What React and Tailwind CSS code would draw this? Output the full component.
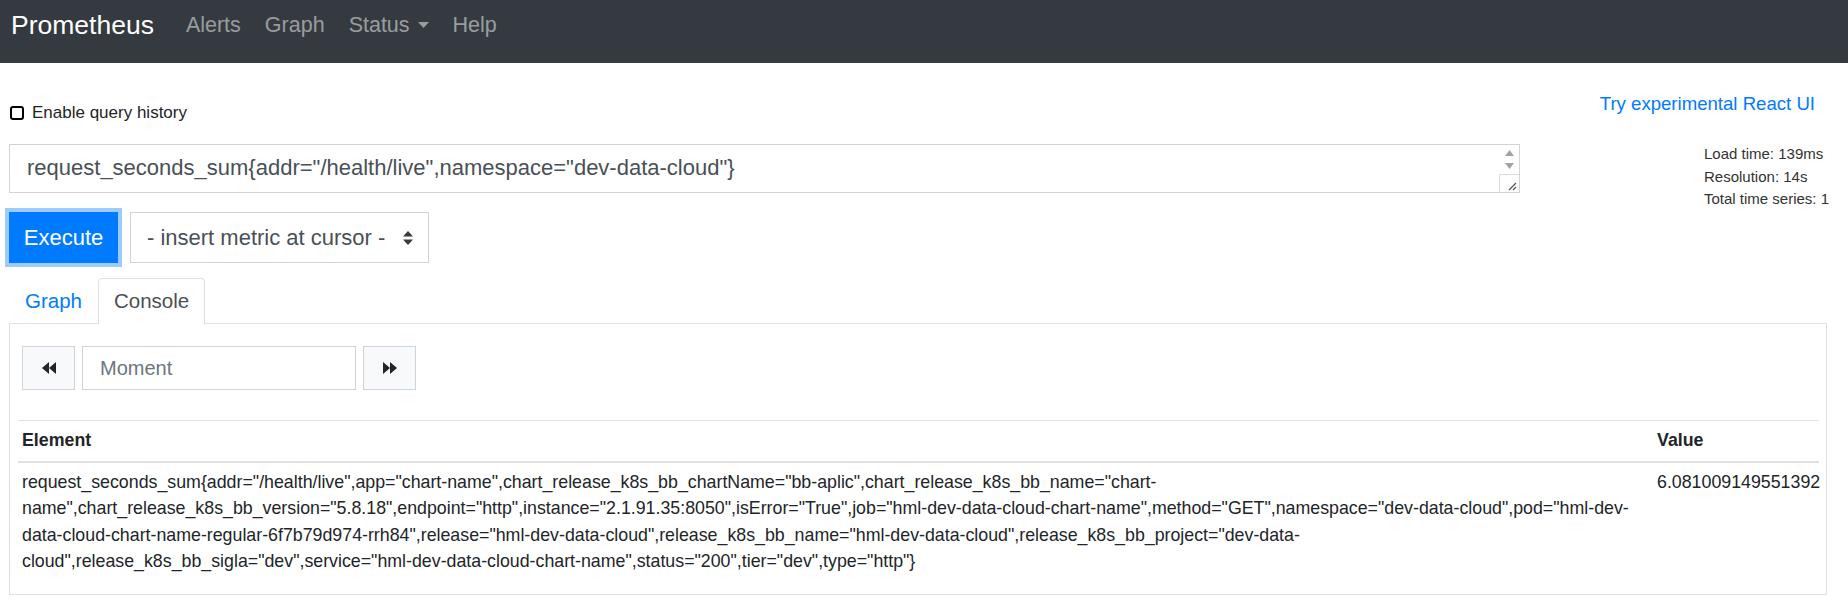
import React from 'react';

const lines = [
    'request_seconds_sum{addr="/health/live",app="chart-name",chart_release_k8s_bb_chartName="bb-aplic",chart_release_k8s_bb_name="chart-',
    'name",chart_release_k8s_bb_version="5.8.18",endpoint="http",instance="2.1.91.35:8050",isError="True",job="hml-dev-data-cloud-chart-name",method="GET",namespace="dev-data-cloud",pod="hml-dev-',
    'data-cloud-chart-name-regular-6f7b79d974-rrh84",release="hml-dev-data-cloud",release_k8s_bb_name="hml-dev-data-cloud",release_k8s_bb_project="dev-data-',
    'cloud",release_k8s_bb_sigla="dev",service="hml-dev-data-cloud-chart-name",status="200",tier="dev",type="http"}',
];

function Navbar() {
    return (
        <div className="h-[63px] bg-[#343a40] flex items-start pt-[7px] px-[11px] leading-[36px]">
            <span className="text-white text-[26.5px] mr-[20px]">Prometheus</span>
            <span className="text-white/50 text-[21.5px] px-[12px]">Alerts</span>
            <span className="text-white/50 text-[21.5px] px-[12px]">Graph</span>
            <span className="text-white/50 text-[21.5px] px-[12px] flex items-center">
                Status
                <svg width="11" height="6" viewBox="0 0 11 6" className="ml-[8px]">
                    <polygon points="0,0 11,0 5.5,6" fill="currentColor" />
                </svg>
            </span>
            <span className="text-white/50 text-[21.5px] px-[12px]">Help</span>
        </div>
    );
}

function Backward() {
    return (
        <svg width="14" height="14" viewBox="0 0 14 14">
            <polygon points="7,1 0,7 7,13" fill="#212529" />
            <polygon points="14,1 7,7 14,13" fill="#212529" />
        </svg>
    );
}

function Forward() {
    return (
        <svg width="14" height="14" viewBox="0 0 14 14">
            <polygon points="0,1 7,7 0,13" fill="#212529" />
            <polygon points="7,1 14,7 7,13" fill="#212529" />
        </svg>
    );
}

export default function App() {
    return (
        <div className="w-[1848px] min-h-[603px] bg-white text-[#212529] font-['Segoe_UI','Liberation_Sans',sans-serif]">
            <Navbar />
            <div className="pl-[9px]">
                <div className="flex justify-between h-[81px] pr-[33px]">
                    <label className="mt-[37px] h-[26px] flex items-center text-[17px]">
                        <span className="w-[14px] h-[14px] border-2 border-black rounded-[3px] ml-[1px] mr-[8px]" />
                        Enable query history
                    </label>
                    <a className="mt-[27px] h-[28px] text-[18.6px] text-[#007bff] leading-[28px]">Try experimental React UI</a>
                </div>

                <div className="flex h-[68px]">
                    <div className="relative w-[1511px] h-[49px] border border-[#ced4da] bg-white">
                        <div className="pl-[17px] pt-[7px] text-[22px] text-[#495057] leading-[32px] whitespace-nowrap">
                            request_seconds_sum{'{'}addr="/health/live",namespace="dev-data-cloud"{'}'}
                        </div>
                        <div className="absolute right-0 top-0 w-[20px] h-[48px] flex flex-col items-center">
                            <svg width="9" height="6" viewBox="0 0 9 6" className="mt-[5px]">
                                <polygon points="4.5,0 9,6 0,6" fill="#a3a3a3" />
                            </svg>
                            <svg width="9" height="6" viewBox="0 0 9 6" className="mt-[7px]">
                                <polygon points="0,0 9,0 4.5,6" fill="#a3a3a3" />
                            </svg>
                            <div className="mt-[5px] w-[20px] h-[19px] border-l border-t border-[#dcdcdc] flex items-end justify-end p-[2px]">
                                <svg width="10" height="10" viewBox="0 0 10 10">
                                    <line x1="2" y1="9" x2="9" y2="2" stroke="#555" strokeWidth="1.2" />
                                    <line x1="6" y1="9" x2="9" y2="6" stroke="#555" strokeWidth="1.2" />
                                </svg>
                            </div>
                        </div>
                    </div>
                    <div className="ml-[184px] -mt-[1px] text-[15px] leading-[22.5px] text-[#333]">
                        <div>Load time: 139ms</div>
                        <div>Resolution: 14s</div>
                        <div>Total time series: 1</div>
                    </div>
                </div>

                <div className="flex items-center gap-[12px] h-[51px]">
                    <button className="w-[109px] h-[51px] bg-[#007bff] text-white text-[22px] ring-4 ring-[#9ccbff]">
                        Execute
                    </button>
                    <div className="w-[299px] h-[51px] border border-[#ced4da] flex items-center justify-between pl-[16px] pr-[15px] text-[22px] text-[#495057]">
                        <span>- insert metric at cursor -</span>
                        <svg width="10" height="16" viewBox="0 0 10 16">
                            <polygon points="5,1 10,6.5 0,6.5" fill="#343a40" />
                            <polygon points="0,9.5 10,9.5 5,15" fill="#343a40" />
                        </svg>
                    </div>
                </div>

                <div className="mt-[15px] w-[1818px]">
                    <div className="flex h-[46px] border-b border-[#dee2e6]">
                        <div className="px-[15px] h-[46px] flex items-center text-[20.5px] text-[#007bff] border border-transparent">Graph</div>
                        <div className="px-[15px] h-[47px] flex items-center text-[20.5px] text-[#495057] bg-white border border-[#dee2e6] border-b-white rounded-t-[4px]">Console</div>
                    </div>
                    <div className="h-[271px] border-x border-b border-[#dee2e6] px-[8px] pt-[22px]">
                        <div className="flex gap-[7px] pl-[4px]">
                            <button className="w-[53px] h-[44px] bg-[#f8f9fa] border border-[#ced4da] flex items-center justify-center">
                                <Backward />
                            </button>
                            <div className="w-[274px] h-[44px] border border-[#ced4da] flex items-center pl-[17px] text-[20px] text-[#6c757d]">
                                Moment
                            </div>
                            <button className="w-[53px] h-[44px] bg-[#f8f9fa] border border-[#ced4da] flex items-center justify-center">
                                <Forward />
                            </button>
                        </div>

                        <table className="mt-[30px] w-[1801px] table-fixed text-[17.8px] border-collapse">
                            <thead>
                                <tr className="border-t border-[#dee2e6] border-b-2">
                                    <th className="text-left font-bold px-[4px] h-[41px] align-middle">Element</th>
                                    <th className="text-left font-bold px-[5px] h-[41px] align-middle w-[167px]">Value</th>
                                </tr>
                            </thead>
                            <tbody>
                                <tr className="border-t-2 border-[#dee2e6]">
                                    <td className="px-[4px] pt-[6px] align-top leading-[26.5px] whitespace-nowrap">
                                        {lines.map((l, i) => (
                                            <div key={i}>{l}</div>
                                        ))}
                                    </td>
                                    <td className="px-[5px] pt-[6px] align-top leading-[26.5px]">6.081009149551392</td>
                                </tr>
                            </tbody>
                        </table>
                    </div>
                </div>
            </div>
        </div>
    );
}
